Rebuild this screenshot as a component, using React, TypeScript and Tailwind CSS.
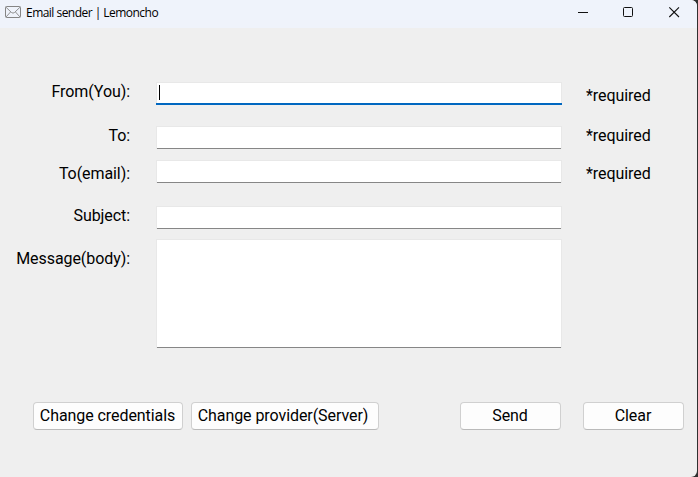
type FieldProps = {
  label: string;
  labelPad?: string;
  required?: boolean;
  requiredPad?: string;
  active?: boolean;
  multiline?: boolean;
  className?: string;
};

function Field({ label, labelPad = "", required, requiredPad = "", active, multiline, className = "" }: FieldProps) {
  const box = "shrink-0 border-t border-x border-[#e8e8e8] bg-white";
  return (
    <div className={`flex ${multiline ? "h-[109px]" : "h-[23px]"} ${className}`}>
      <label className={`w-[130px] shrink-0 text-right whitespace-nowrap ${labelPad}`}>{label}</label>
      {active ? (
        <div className="ml-[26px] flex w-[406px] shrink-0 flex-col border-b-2 border-[#0067c0]">
          <div className={`${box} flex-1`}>
            <div className="mt-[2px] ml-[2px] h-[15px] w-px bg-black" />
          </div>
        </div>
      ) : (
        <div className={`${box} ml-[26px] flex w-[406px] flex-col justify-end`}>
          <div className="h-px bg-[#868686]" />
        </div>
      )}
      {required && <span className={`ml-6 ${requiredPad}`}>*required</span>}
    </div>
  );
}

function Button({ children, className }: { children: string; className: string }) {
  return (
    <button
      className={`h-7 shrink-0 rounded-[4px] border border-[#d0d0d0] border-b-[#bababa] bg-[#fdfdfd] text-center leading-[26px] whitespace-nowrap ${className}`}
    >
      {children}
    </button>
  );
}

export default function App() {
  return (
    <div className="h-[477px] w-[698px] overflow-hidden bg-[#303030]">
      <div className="flex h-[477px] w-[697px] flex-col overflow-hidden rounded-r-[6px] bg-[#efefef] font-['Roboto',sans-serif] text-base leading-5 tracking-[-0.07px] text-black">
        <header className="flex h-7 shrink-0 items-center bg-[#eff3fb]">
          <svg className="ml-[5px] -mt-1 h-3 w-4 shrink-0" viewBox="0 0 16 12" fill="none" stroke="#858585">
            <rect x="0.5" y="0.5" width="15" height="11" rx="1" />
            <path d="M.8 1 6.500 6.500Q8 7.800 9.500 6.500L15.200 1M1 11l4.500-5M15 11l-4.500-5" strokeWidth="0.9" />
          </svg>
          <span className="-mt-0.5 ml-[5px] font-['Open_Sans',sans-serif] text-xs leading-4 tracking-[-0.53px] whitespace-nowrap">
            Email sender | Lemoncho
          </span>
          <svg className="mr-[17px] ml-auto h-7 w-[103px] shrink-0" viewBox="577 0 103 28" fill="none" stroke="#111">
            <path d="M578 12.500h10" />
            <rect x="623.5" y="7.500" width="9" height="9" rx="1" />
            <path d="m669.300 7.300 9.700 9.700m0-9.700-9.700 9.700" strokeWidth="1.100" />
          </svg>
        </header>
        <main className="pt-[54px]">
          <Field label="From(You):" required requiredPad="pt-1" active />
          <Field label="To:" required className="mt-[21px]" />
          <Field label="To(email):" labelPad="pt-1" required requiredPad="pt-1" className="mt-[11px]" />
          <Field label="Subject:" className="mt-[23px]" />
          <Field label="Message(body):" labelPad="pt-[10px]" multiline className="mt-[10px]" />
        </main>
        <footer className="mt-[54px] flex pl-[33px]">
          <Button className="w-[150px] pr-px">Change credentials</Button>
          <Button className="ml-2 w-[188px] pr-1">Change provider(Server)</Button>
          <Button className="ml-[81px] w-[101px] pr-px">Send</Button>
          <Button className="ml-[22px] w-[101px] pr-px">Clear</Button>
        </footer>
      </div>
    </div>
  );
}
